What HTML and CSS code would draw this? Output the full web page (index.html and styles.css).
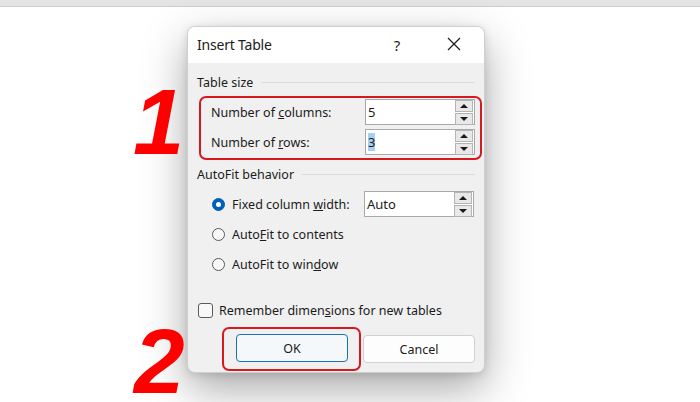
FILE: index.html
```html
<!DOCTYPE html>
<html>
<head>
<meta charset="utf-8">
<link rel="stylesheet" href="styles.css">
</head>
<body>
<div class="topbar"></div>
<div class="stage">
  <div class="dialog">
    <div class="titlebar">
      <span class="title">Insert Table</span>
      <span class="help">?</span>
      <span class="close">
        <svg width="14" height="14" viewBox="0 0 14 14"><path d="M1 1 L13 13 M13 1 L1 13" stroke="#1a1a1a" stroke-width="1.2" fill="none"/></svg>
      </span>
    </div>
    <div class="body">
      <div class="group-head"><span>Table size</span><span class="rule rule1"></span></div>
      <div class="mark mark-size">
        <div class="row">
          <span class="label">Number of <u>c</u>olumns:</span>
          <div class="spin"><span class="val">5</span><div class="arrows"><span class="arr up"></span><span class="arr down"></span></div></div>
        </div>
        <div class="row">
          <span class="label">Number of <u>r</u>ows:</span>
          <div class="spin"><span class="val"><span class="sel">3</span></span><div class="arrows"><span class="arr up"></span><span class="arr down"></span></div></div>
        </div>
      </div>
      <div class="group-head group2"><span>AutoFit behavior</span><span class="rule"></span></div>
      <div class="options">
        <div class="row opt">
          <span class="radio on"></span>
          <span class="label">Fixed column <u>w</u>idth:</span>
          <div class="spin"><span class="val">Auto</span><div class="arrows"><span class="arr up"></span><span class="arr down"></span></div></div>
        </div>
        <div class="row opt">
          <span class="radio"></span>
          <span class="label">Auto<u>F</u>it to contents</span>
        </div>
        <div class="row opt">
          <span class="radio"></span>
          <span class="label">AutoFit to win<u>d</u>ow</span>
        </div>
      </div>
      <div class="check-row">
        <span class="checkbox"></span>
        <span class="label">Remember dimen<u>s</u>ions for new tables</span>
      </div>
      <div class="buttons">
        <div class="mark mark-ok"><button class="btn ok">OK</button></div>
        <button class="btn">Cancel</button>
      </div>
    </div>
  </div>
  <span class="num num1">1</span>
  <span class="num num2">2</span>
</div>
</body>
</html>
```

FILE: styles.css
```css
html, body {
  margin: 0;
  padding: 0;
}
body {
  width: 700px;
  height: 402px;
  overflow: hidden;
  background: #ffffff;
  font-family: "Noto Sans", "Open Sans", sans-serif;
  color: #1b1b1b;
}
.topbar {
  height: 6px;
  background: #e4e4e4;
  border-bottom: 1px solid #cdcdcd;
}
.stage {
  position: relative;
  height: 395px;
  padding-top: 19px;
  box-sizing: border-box;
}
.dialog {
  margin-left: 187px;
  width: 298px;
  height: 347px;
  background: #f0f0f0;
  border-radius: 8px;
  border: 1px solid #cfcfcf;
  box-sizing: border-box;
  overflow: hidden;
  box-shadow: 0 16px 44px rgba(0, 0, 0, 0.34), 0 2px 8px rgba(0, 0, 0, 0.12);
}
.titlebar {
  height: 36px;
  background: #ffffff;
  display: flex;
  align-items: center;
  padding-left: 9px;
}
.title {
  font-size: 14px;
  flex: 1;
  letter-spacing: -0.2px;
  padding-bottom: 1px;
}
.help {
  font-size: 15px;
  width: 20px;
  text-align: center;
  margin-right: 40px;
}
.close {
  width: 14px;
  height: 14px;
  margin-right: 23px;
  display: flex;
  margin-top: -2px;
}
.body {
  padding: 10px 2px 0 9px;
  font-size: 12.5px;
}
.group-head {
  display: flex;
  align-items: center;
  height: 18px;
  gap: 8px;
  padding-right: 7px;
}
.rule {
  flex: 1;
  height: 1px;
  background: #dcdcdc;
}
.group2 {
  margin-top: 5px;
}
.mark {
  border: 2px solid #d7191f;
  border-radius: 7px;
}
.mark-size {
  margin-top: 5px;
  margin-left: 2px;
  padding: 1px 5px 3px 10px;
  display: flex;
  flex-direction: column;
  gap: 4px;
}
.row {
  display: flex;
  align-items: center;
  height: 26px;
}
.row .label {
  flex: 1;
}
.spin {
  width: 110px;
  height: 26px;
  box-sizing: border-box;
  background: #ffffff;
  border: 1px solid #a9a9a9;
  display: flex;
  align-items: center;
}
.val {
  flex: 1;
  padding-left: 2px;
  font-size: 13px;
}
.sel {
  background: #a8d0f0;
}
.arrows {
  width: 18px;
  display: flex;
  flex-direction: column;
  gap: 1px;
  margin-right: 1px;
}
.arr {
  height: 10px;
  background: #e8e8e8;
  border: 1px solid #b4b4b4;
  display: flex;
  align-items: center;
  justify-content: center;
}
.arr::after {
  content: "";
  width: 0;
  height: 0;
  border-left: 4px solid transparent;
  border-right: 4px solid transparent;
}
.arr.up::after {
  border-bottom: 4px solid #1a1a1a;
}
.arr.down::after {
  border-top: 4px solid #1a1a1a;
}
.options {
  margin-top: 8px;
  padding-left: 15px;
  padding-right: 8px;
  display: flex;
  flex-direction: column;
  gap: 4px;
}
.opt .label {
  flex: 1;
}
.radio {
  width: 13px;
  height: 13px;
  border-radius: 50%;
  border: 1px solid #5a5a5a;
  background: #f8f8f8;
  margin-right: 7px;
  box-sizing: border-box;
  display: flex;
  align-items: center;
  justify-content: center;
}
.radio.on {
  background: #005fb8;
  border-color: #005fb8;
}
.radio.on::after {
  content: "";
  width: 5px;
  height: 5px;
  border-radius: 50%;
  background: #ffffff;
}
.check-row {
  margin-top: 25px;
  display: flex;
  align-items: center;
  height: 16px;
}
.checkbox {
  width: 15px;
  height: 15px;
  box-sizing: border-box;
  border: 1px solid #5a5a5a;
  border-radius: 3px;
  background: #f8f8f8;
  margin-left: 1px;
  margin-right: 6px;
}
.buttons {
  margin-top: 9px;
  margin-left: 25px;
  display: flex;
  align-items: center;
  gap: 2px;
}
.mark-ok {
  padding: 5px 11px 7px 12px;
}
.btn {
  width: 112px;
  height: 28px;
  font-family: inherit;
  font-size: 12.5px;
  color: #1b1b1b;
  background: #fdfdfd;
  border: 1px solid #d0d0d0;
  border-radius: 4px;
  padding: 0;
}
.btn.ok {
  background: #f4f8fb;
  border-color: #1f6fb8;
}
.num {
  position: absolute;
  font-family: "Liberation Sans", Arial, sans-serif;
  font-weight: bold;
  font-style: italic;
  color: #ff0000;
  line-height: 0.76;
}
.num1 {
  left: 133px;
  top: 81px;
  font-size: 92px;
}
.num2 {
  left: 134px;
  top: 320px;
  font-size: 91px;
}
```
